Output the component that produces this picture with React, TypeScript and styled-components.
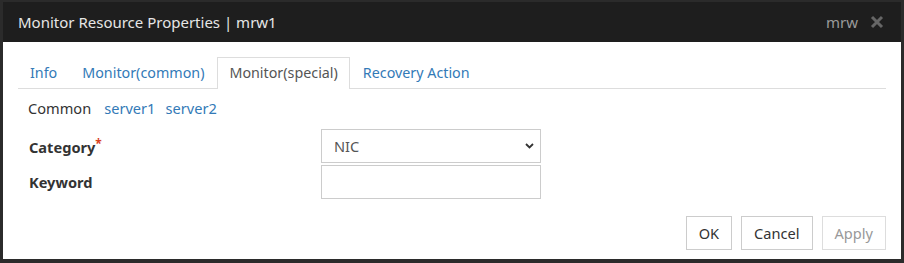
import styled, { createGlobalStyle } from 'styled-components';

const GlobalStyle = createGlobalStyle`
  html, body {
    margin: 0;
    padding: 0;
    background: #2b2b2b;
  }
  body {
    font-family: "Noto Sans", "Noto Sans CJK JP", sans-serif;
    font-size: 14.6px;
    color: #333;
  }
`;

interface TabItem {
  label: string;
  active?: boolean;
}

const tabs: TabItem[] = [
  { label: 'Info' },
  { label: 'Monitor(common)' },
  { label: 'Monitor(special)', active: true },
  { label: 'Recovery Action' },
];

export default function App() {
  return (
    <>
      <GlobalStyle />
      <Dialog>
        <Header>
          <Title>Monitor Resource Properties | mrw1</Title>
          <HeaderRight>
            <span>mrw</span>
            <CloseIcon width="14" height="14" viewBox="0 0 14 14">
              <path d="M2 2 L12 12 M12 2 L2 12" stroke="#666" strokeWidth="3" />
            </CloseIcon>
          </HeaderRight>
        </Header>
        <Body>
          <Tabs>
            {tabs.map((t) => (
              <Tab key={t.label} active={!!t.active}>
                {t.label}
              </Tab>
            ))}
          </Tabs>
          <SubNav>
            <SubItem active>Common</SubItem>
            <SubItem>server1</SubItem>
            <SubItem>server2</SubItem>
          </SubNav>
          <Form>
            <Label>
              Category<Required>*</Required>
            </Label>
            <Select>
              <span>NIC</span>
              <svg width="9" height="6" viewBox="0 0 9 6">
                <path d="M1 1 L4.5 4.5 L8 1" fill="none" stroke="#333" strokeWidth="1.8" />
              </svg>
            </Select>
            <Label>Keyword</Label>
            <Input />
          </Form>
          <Footer>
            <Button>OK</Button>
            <Button>Cancel</Button>
            <Button disabled>Apply</Button>
          </Footer>
        </Body>
      </Dialog>
    </>
  );
}

const Dialog = styled.div`
  width: 904px;
  height: 263px;
  box-sizing: border-box;
  padding: 2px 3px 4px 3px;
  background: #2b2b2b;
  display: flex;
  flex-direction: column;
`;

const Header = styled.div`
  height: 40px;
  background: #1e1e1e;
  display: flex;
  align-items: center;
  justify-content: space-between;
  padding: 0 17px 0 15px;
`;

const Title = styled.div`
  color: #e6e6e6;
  font-size: 15px;
`;

const HeaderRight = styled.div`
  display: flex;
  align-items: center;
  gap: 12px;
  color: #9a9a9a;
  font-size: 15px;
`;

const CloseIcon = styled.svg`
  display: block;
`;

const Body = styled.div`
  flex: 1;
  background: #fff;
  padding: 15px 15px 0 15px;
  display: flex;
  flex-direction: column;
`;

const Tabs = styled.div`
  display: flex;
  align-items: flex-end;
  height: 31px;
  border-bottom: 1px solid #ddd;
`;

const Tab = styled.div<{ active: boolean }>`
  font-size: 14.3px;
  padding: 0 11px;
  margin-right: 1px;
  display: flex;
  align-items: center;
  color: ${({ active }) => (active ? '#555' : '#337ab7')};
  border: 1px solid ${({ active }) => (active ? '#ddd' : 'transparent')};
  border-bottom: none;
  background: ${({ active }) => (active ? '#fff' : 'transparent')};
  height: ${({ active }) => (active ? '32px' : '31px')};
  margin-bottom: ${({ active }) => (active ? '-1px' : '0')};
  box-sizing: border-box;
  padding-bottom: 2px;
`;

const SubNav = styled.div`
  display: flex;
  gap: 10px;
  padding: 6px 0 0 10px;
  height: 26px;
  align-items: center;
`;

const SubItem = styled.span<{ active?: boolean }>`
  color: ${({ active }) => (active ? '#333' : '#337ab7')};
  margin-right: ${({ active }) => (active ? '3px' : '0')};
`;

const Form = styled.div`
  display: grid;
  grid-template-columns: 303px 220px;
  grid-auto-rows: 34px;
  row-gap: 2px;
  margin-top: 8px;
  align-items: center;
`;

const Label = styled.div`
  font-weight: bold;
  padding-left: 11px;
  color: #333;
`;

const Required = styled.span`
  color: #d9401e;
  vertical-align: 5px;
  font-size: 12px;
`;

const Select = styled.div`
  height: 34px;
  box-sizing: border-box;
  border: 1px solid #ccc;
  display: flex;
  align-items: center;
  justify-content: space-between;
  padding: 0 6px 0 12px;
  color: #555;
`;

const Input = styled.div`
  height: 34px;
  box-sizing: border-box;
  border: 1px solid #ccc;
`;

const Footer = styled.div`
  display: flex;
  justify-content: flex-end;
  gap: 9px;
  margin-top: 17px;
`;

const Button = styled.button`
  font-family: inherit;
  font-size: 14.6px;
  height: 34px;
  padding: 0 12px;
  min-width: 46px;
  background: #fff;
  border: 1px solid #ccc;
  color: #333;
  &:disabled {
    color: #999;
    border-color: #ddd;
  }
`;
